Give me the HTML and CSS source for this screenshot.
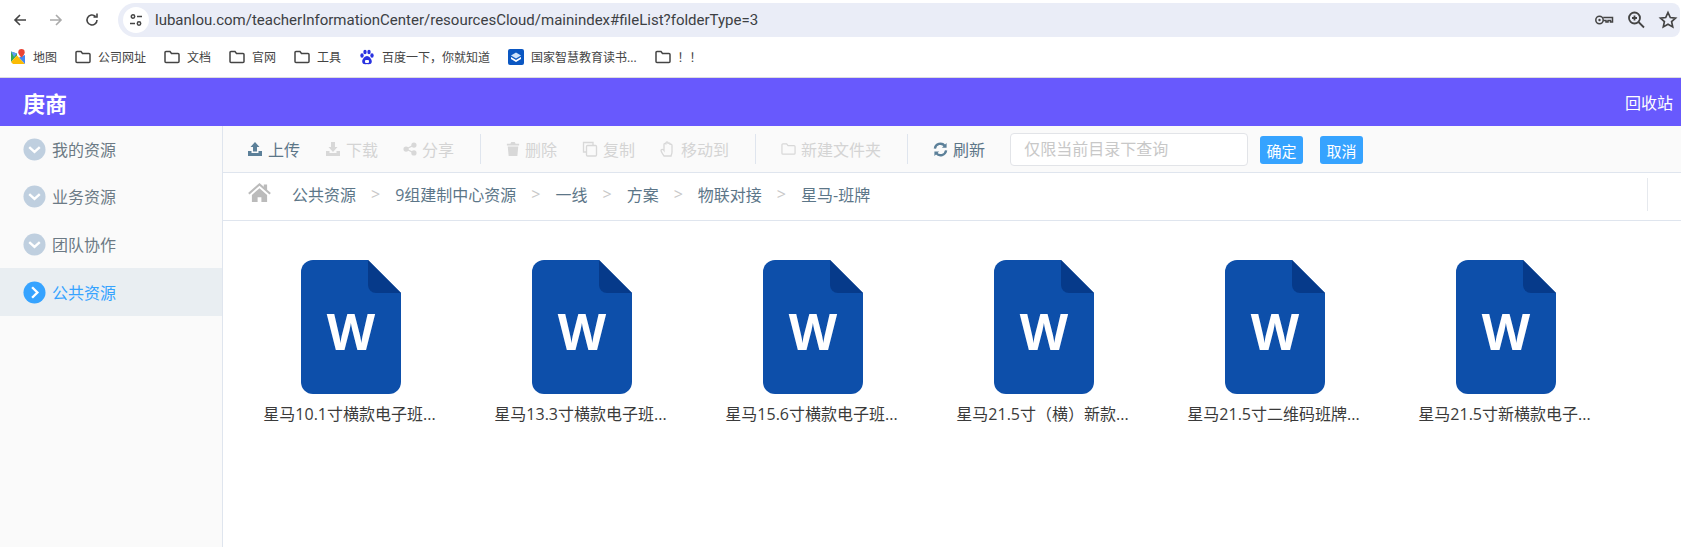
FILE: index.html
```html
<!DOCTYPE html>
<html lang="zh-CN">
<head>
    <meta charset="UTF-8">
    <title>资源云</title>
    <link rel="stylesheet" href="styles.css">
</head>
<body>
    <div class="browser-bar">
        <svg class="nav-icon" viewBox="0 0 16 16"><path d="M14 8H3M8 3 3 8l5 5" fill="none" stroke="#444" stroke-width="1.6"/></svg>
        <svg class="nav-icon" viewBox="0 0 16 16"><path d="M2 8h11M8 3l5 5-5 5" fill="none" stroke="#aaa" stroke-width="1.6"/></svg>
        <svg class="nav-icon" viewBox="0 0 16 16"><path d="M13 8a5 5 0 1 1-1.6-3.7M13 1.500V5H9.500" fill="none" stroke="#444" stroke-width="1.600"/></svg>
        <div class="omnibox">
            <span class="site-info">
                <svg viewBox="0 0 16 16" width="16" height="16"><g fill="none" stroke="#444" stroke-width="1.500"><circle cx="5" cy="4.500" r="1.700"/><path d="M9 4.500h5M2 11.500h5"/><circle cx="11" cy="11.500" r="1.700"/></g></svg>
            </span>
            <span class="url">lubanlou.com/teacherInformationCenter/resourcesCloud/mainindex#fileList?folderType=3</span>
            <span class="omni-icons">
                <svg viewBox="0 0 20 20" width="20" height="20"><g fill="none" stroke="#444" stroke-width="1.500"><circle cx="5.500" cy="10" r="3.700"/><path d="M9.200 7.500h9.300v4.500h-2v-1.500h-2.500V12h-2v-1.500h-2.800"/></g><circle cx="5.500" cy="10" r="1.200" fill="#444"/></svg>
                <svg viewBox="0 0 20 20" width="20" height="20"><g fill="none" stroke="#444" stroke-width="1.800"><circle cx="8.500" cy="8" r="5.500"/><path d="M12.500 12l5.500 5.500"/><path d="M6 8h5M8.500 5.500v5"/></g></svg>
                <svg viewBox="0 0 20 20" width="20" height="20"><path d="M10 2.500l2.300 5 5.200.6-3.900 3.500 1.100 5.300L10 14.200l-4.700 2.700 1.100-5.300L2.500 8.100l5.200-.6z" fill="none" stroke="#444" stroke-width="1.700"/></svg>
            </span>
        </div>
    </div>

    <div class="bookmarks">
        <span class="mark">
            <svg viewBox="0 0 16 16" width="16" height="16"><path d="M1 2.500 7 4.500v2L1 13z" fill="#34a853"/><path d="M1 13 7 6.500 15 15H3z" fill="#fbbc04"/><path d="M9 8.500 15 6v9z" fill="#4285f4"/><path d="M1 2.500 7 4.500 4 8z" fill="#5f9cf5"/><path d="M11.500 0a3.200 3.200 0 0 1 3.200 3.200c0 2.300-3.200 5.300-3.200 5.300S8.300 5.500 8.300 3.200A3.200 3.200 0 0 1 11.500 0z" fill="#ea4335"/></svg>
            地图
        </span>
        <span class="mark"><svg class="folder" viewBox="0 0 16 14"><path d="M1 2.500a1 1 0 0 1 1-1h4l1.500 2H14a1 1 0 0 1 1 1v7a1 1 0 0 1-1 1H2a1 1 0 0 1-1-1z" fill="none" stroke="#444" stroke-width="1.500"/></svg>公司网址</span>
        <span class="mark"><svg class="folder" viewBox="0 0 16 14"><path d="M1 2.500a1 1 0 0 1 1-1h4l1.500 2H14a1 1 0 0 1 1 1v7a1 1 0 0 1-1 1H2a1 1 0 0 1-1-1z" fill="none" stroke="#444" stroke-width="1.500"/></svg>文档</span>
        <span class="mark"><svg class="folder" viewBox="0 0 16 14"><path d="M1 2.500a1 1 0 0 1 1-1h4l1.500 2H14a1 1 0 0 1 1 1v7a1 1 0 0 1-1 1H2a1 1 0 0 1-1-1z" fill="none" stroke="#444" stroke-width="1.500"/></svg>官网</span>
        <span class="mark"><svg class="folder" viewBox="0 0 16 14"><path d="M1 2.500a1 1 0 0 1 1-1h4l1.500 2H14a1 1 0 0 1 1 1v7a1 1 0 0 1-1 1H2a1 1 0 0 1-1-1z" fill="none" stroke="#444" stroke-width="1.500"/></svg>工具</span>
        <span class="mark">
            <svg viewBox="0 0 16 16" width="16" height="16" fill="#2932e1"><ellipse cx="3" cy="6.500" rx="1.700" ry="2.200"/><ellipse cx="13" cy="6.500" rx="1.700" ry="2.200"/><ellipse cx="6" cy="3" rx="1.700" ry="2.300"/><ellipse cx="10" cy="3" rx="1.700" ry="2.300"/><path d="M8 7c-2 0-4.800 3-4.800 5.500C3.200 15.500 6 15.500 8 15c2 .5 4.800.5 4.800-2.500C12.800 10 10 7 8 7z"/><rect x="6" y="11" width="4" height="3" rx="1" fill="#fff"/></svg>
            百度一下，你就知道
        </span>
        <span class="mark">
            <svg viewBox="0 0 16 16" width="16" height="16"><rect width="16" height="16" rx="2" fill="#0b57c2"/><path d="M8 3.500l5 3-5 3-5-3z" fill="#cfe3fa"/><path d="M3 8l5 3 5-3v2l-5 3-5-3z" fill="#fff"/></svg>
            国家智慧教育读书...
        </span>
        <span class="mark"><svg class="folder" viewBox="0 0 16 14"><path d="M1 2.500a1 1 0 0 1 1-1h4l1.500 2H14a1 1 0 0 1 1 1v7a1 1 0 0 1-1 1H2a1 1 0 0 1-1-1z" fill="none" stroke="#444" stroke-width="1.500"/></svg>！！</span>
    </div>

    <header class="app-header">
        <span class="brand">庚商</span>
        <span class="recycle">回收站</span>
    </header>

    <div class="app-body">
        <aside class="sidebar">
            <div class="side-item">
                <svg class="side-icon" viewBox="0 0 24 24"><circle cx="12" cy="12" r="11.500" fill="#bfcfdf"/><path d="M6.500 9.500 12 14.500l5.500-5" fill="none" stroke="#fff" stroke-width="2.500"/></svg>
                我的资源
            </div>
            <div class="side-item">
                <svg class="side-icon" viewBox="0 0 24 24"><circle cx="12" cy="12" r="11.500" fill="#bfcfdf"/><path d="M6.500 9.500 12 14.500l5.500-5" fill="none" stroke="#fff" stroke-width="2.500"/></svg>
                业务资源
            </div>
            <div class="side-item">
                <svg class="side-icon" viewBox="0 0 24 24"><circle cx="12" cy="12" r="11.500" fill="#bfcfdf"/><path d="M6.500 9.500 12 14.500l5.500-5" fill="none" stroke="#fff" stroke-width="2.500"/></svg>
                团队协作
            </div>
            <div class="side-item active">
                <svg class="side-icon" viewBox="0 0 24 24"><circle cx="12" cy="12" r="11.500" fill="#36a3ff"/><path d="M9.500 6.500 15 12l-5.500 5.500" fill="none" stroke="#fff" stroke-width="2.500"/></svg>
                公共资源
            </div>
        </aside>

        <main class="content">
            <div class="toolbar">
                <span class="tool">
                    <svg viewBox="0 0 16 16" width="16" height="16" fill="#5c8099"><path d="M8 1l4.500 5H10v4.500H6V6H3.500z"/><path d="M1 10h3.500v2h7v-2H15v5H1z"/></svg>上传
                </span>
                <span class="tool off">
                    <svg viewBox="0 0 16 16" width="16" height="16" fill="#d8d8d8"><path d="M6 1h4v5h2.500L8 11 3.500 6H6z"/><path d="M1 10h3.500v2h7v-2H15v5H1z"/></svg>下载
                </span>
                <span class="tool off">
                    <svg viewBox="0 0 16 16" width="14" height="14" fill="#d8d8d8"><circle cx="3.500" cy="8" r="3"/><circle cx="12.500" cy="3.500" r="3"/><circle cx="12.500" cy="12.500" r="3"/><path d="M3.500 8l9-4.500M3.500 8l9 4.500" stroke="#d8d8d8" stroke-width="1.500"/></svg>分享
                </span>
                <span class="divider"></span>
                <span class="tool off">
                    <svg viewBox="0 0 16 16" width="14" height="14" fill="#d8d8d8"><path d="M6 0h4l1 2h4v2H1V2h4zM2 5h12l-1 11H3z"/></svg>删除
                </span>
                <span class="tool off">
                    <svg viewBox="0 0 16 16" width="16" height="16" fill="none" stroke="#d8d8d8" stroke-width="1.300"><path d="M11 4V1.500H1.500V11H4"/><rect x="4.500" y="4.500" width="10" height="10.500" rx="1"/></svg>复制
                </span>
                <span class="tool off">
                    <svg viewBox="0 0 16 16" width="16" height="16" fill="none" stroke="#d8d8d8" stroke-width="1.300"><path d="M4 15c-1-2-3-4-3-5.500S3 8 4 9.500V3.500c0-1.500 2-1.500 2 0V2c0-1.500 2-1.500 2 0v1c0-1.500 2-1.500 2 0v1c0-1.500 2-1 2 .5V11c0 2-1 3-1 4z"/></svg>移动到
                </span>
                <span class="divider"></span>
                <span class="tool off">
                    <svg viewBox="0 0 16 14" width="15" height="14" fill="none" stroke="#d8d8d8" stroke-width="1.300"><path d="M1 2.500a1 1 0 0 1 1-1h4l1.500 2H14a1 1 0 0 1 1 1v7a1 1 0 0 1-1 1H2a1 1 0 0 1-1-1z"/></svg>新建文件夹
                </span>
                <span class="divider"></span>
                <span class="tool">
                    <svg viewBox="0 0 16 16" width="15" height="15" fill="none" stroke="#5c8099" stroke-width="2.500"><path d="M2 7a6 6 0 0 1 10.500-3M14 9a6 6 0 0 1-10.500 3"/><path d="M14.500 1v5h-5zM1.500 15v-5h5z" fill="#5c8099" stroke="none"/></svg>刷新
                </span>
                <input class="search" type="text" placeholder="仅限当前目录下查询">
                <button class="btn btn-ok">确定</button>
                <button class="btn">取消</button>
            </div>

            <div class="crumbs">
                <svg class="home" viewBox="0 0 24 20" width="23" height="19"><path d="M12 0 0 10.500l1.500 1.500L12 3l10.500 9 1.500-1.500L20 7V1.500h-3.500V4z" fill="#bbb"/><path d="M4 12.500 12 5.500l8 7V20h-6v-5h-4v5H4z" fill="#bbb"/></svg>
                <span>公共资源</span>
                <span class="sep">&gt;</span>
                <span>9组建制中心资源</span>
                <span class="sep">&gt;</span>
                <span>一线</span>
                <span class="sep">&gt;</span>
                <span>方案</span>
                <span class="sep">&gt;</span>
                <span>物联对接</span>
                <span class="sep">&gt;</span>
                <span>星马-班牌</span>
                <span class="crumb-end"></span>
            </div>

            <div class="file-grid">
                <div class="file">
                    <svg class="word" viewBox="0 0 100 134"><path d="M12 0h55l33 33v89a12 12 0 0 1-12 12H12a12 12 0 0 1-12-12V12A12 12 0 0 1 12 0z" fill="#0d4faa"/><path d="M67 0l33 33H75a8 8 0 0 1-8-8z" fill="#063a8a"/></svg>
                    <span class="file-w">W</span>
                    <div class="file-name">星马10.1寸横款电子班...</div>
                </div>
                <div class="file">
                    <svg class="word" viewBox="0 0 100 134"><path d="M12 0h55l33 33v89a12 12 0 0 1-12 12H12a12 12 0 0 1-12-12V12A12 12 0 0 1 12 0z" fill="#0d4faa"/><path d="M67 0l33 33H75a8 8 0 0 1-8-8z" fill="#063a8a"/></svg>
                    <span class="file-w">W</span>
                    <div class="file-name">星马13.3寸横款电子班...</div>
                </div>
                <div class="file">
                    <svg class="word" viewBox="0 0 100 134"><path d="M12 0h55l33 33v89a12 12 0 0 1-12 12H12a12 12 0 0 1-12-12V12A12 12 0 0 1 12 0z" fill="#0d4faa"/><path d="M67 0l33 33H75a8 8 0 0 1-8-8z" fill="#063a8a"/></svg>
                    <span class="file-w">W</span>
                    <div class="file-name">星马15.6寸横款电子班...</div>
                </div>
                <div class="file">
                    <svg class="word" viewBox="0 0 100 134"><path d="M12 0h55l33 33v89a12 12 0 0 1-12 12H12a12 12 0 0 1-12-12V12A12 12 0 0 1 12 0z" fill="#0d4faa"/><path d="M67 0l33 33H75a8 8 0 0 1-8-8z" fill="#063a8a"/></svg>
                    <span class="file-w">W</span>
                    <div class="file-name">星马21.5寸（横）新款...</div>
                </div>
                <div class="file">
                    <svg class="word" viewBox="0 0 100 134"><path d="M12 0h55l33 33v89a12 12 0 0 1-12 12H12a12 12 0 0 1-12-12V12A12 12 0 0 1 12 0z" fill="#0d4faa"/><path d="M67 0l33 33H75a8 8 0 0 1-8-8z" fill="#063a8a"/></svg>
                    <span class="file-w">W</span>
                    <div class="file-name">星马21.5寸二维码班牌...</div>
                </div>
                <div class="file">
                    <svg class="word" viewBox="0 0 100 134"><path d="M12 0h55l33 33v89a12 12 0 0 1-12 12H12a12 12 0 0 1-12-12V12A12 12 0 0 1 12 0z" fill="#0d4faa"/><path d="M67 0l33 33H75a8 8 0 0 1-8-8z" fill="#063a8a"/></svg>
                    <span class="file-w">W</span>
                    <div class="file-name">星马21.5寸新横款电子...</div>
                </div>
            </div>
        </main>
    </div>
</body>
</html>
```
FILE: styles.css
```css
* {
    box-sizing: border-box;
}
html, body {
    height: 100%;
}
body {
    margin: 0;
    height: 547px;
    overflow: hidden;
    display: flex;
    flex-direction: column;
    font-family: "Open Sans", "Noto Sans CJK SC", sans-serif;
    background-color: #ffffff;
}
.browser-bar {
    height: 40px;
    flex: none;
    display: flex;
    align-items: center;
    padding: 3px 1px 3px 12px;
}
.nav-icon {
    width: 16px;
    height: 16px;
    margin-right: 20px;
    flex: none;
}
.omnibox {
    flex: 1;
    height: 34px;
    margin-left: -2px;
    background-color: #eaedf7;
    border-radius: 17px 8px 8px 17px;
    display: flex;
    align-items: center;
    padding-left: 5px;
}
.site-info {
    width: 26px;
    height: 26px;
    border-radius: 50%;
    background-color: #ffffff;
    display: flex;
    align-items: center;
    justify-content: center;
}
.url {
    margin-left: 6px;
    font-family: Roboto, sans-serif;
    font-size: 15px;
    color: #3c4043;
    flex: 1;
}
.omni-icons {
    display: flex;
    gap: 12px;
    margin-right: 2px;
}
.bookmarks {
    height: 38px;
    flex: none;
    display: flex;
    align-items: center;
    padding-left: 10px;
    padding-bottom: 3px;
    gap: 18px;
    font-size: 12px;
    color: #444444;
    border-bottom: 1px solid #dddddd;
}
.mark {
    display: flex;
    align-items: center;
    gap: 7px;
}
.folder {
    width: 16px;
    height: 14px;
}
.app-header {
    height: 48px;
    flex: none;
    background-color: #6859fd;
    display: flex;
    align-items: center;
    justify-content: space-between;
    padding: 0 8px 0 23px;
    color: #ffffff;
}
.brand {
    font-size: 22px;
    font-weight: 700;
}
.recycle {
    font-size: 16px;
}
.app-body {
    flex: 1;
    display: flex;
    min-height: 0;
}
.sidebar {
    width: 223px;
    flex: none;
    background-color: #fafafa;
    border-right: 1px solid #dfe5ee;
}
.side-item {
    height: 48px;
    display: flex;
    align-items: center;
    padding-left: 23px;
    gap: 6px;
    font-size: 16px;
    color: #6c7a85;
}
.side-item:first-child {
    height: 46px;
}
.side-item.active {
    background-color: #e9eef2;
    color: #36a3ff;
}
.side-icon {
    width: 23px;
    height: 23px;
}
.content {
    flex: 1;
    min-width: 0;
    display: flex;
    flex-direction: column;
}
.toolbar {
    height: 47px;
    flex: none;
    display: flex;
    align-items: center;
    padding-left: 24px;
    background-color: #fafafa;
    border-bottom: 1px solid #dfe5ee;
    font-size: 16px;
    color: #5c7688;
}
.tool {
    display: flex;
    align-items: center;
    gap: 5px;
    margin-right: 25px;
}
.tool.off {
    color: #d4d4d4;
}
.divider {
    width: 1px;
    height: 30px;
    background-color: #dfe5ee;
    margin: 0 25px 0 1px;
}
.search {
    width: 238px;
    height: 33px;
    margin-right: 12px;
    padding: 0 13px;
    border: 1px solid #e2e4e8;
    border-radius: 4px;
    background-color: #ffffff;
    font-family: inherit;
    font-size: 16px;
    outline: none;
}
.search::placeholder {
    color: #c8c8c8;
}
.btn {
    width: 43px;
    height: 28px;
    margin-top: 2px;
    padding: 0;
    border: none;
    border-radius: 3px;
    background-color: #36a3ff;
    color: #ffffff;
    font-family: inherit;
    font-size: 15px;
}
.btn-ok {
    margin-right: 17px;
}
.crumbs {
    height: 48px;
    flex: none;
    display: flex;
    align-items: center;
    padding: 0 0 5px 25px;
    border-bottom: 1px solid #dfe5ee;
    font-size: 16px;
    color: #5c7688;
    gap: 15px;
}
.home {
    margin: -3px 6px 0 0;
}
.sep {
    color: #c8c8c8;
}
.crumb-end {
    margin-left: auto;
    width: 1px;
    height: 33px;
    background-color: #e6e9ee;
    margin-right: 33px;
}
.file-grid {
    display: flex;
    padding-top: 39px;
    padding-left: 25px;
}
.file {
    width: 231px;
    position: relative;
    display: flex;
    flex-direction: column;
    align-items: center;
}
.word {
    width: 100px;
    height: 134px;
    margin-right: 25px;
}
.file-w {
    position: absolute;
    top: 39px;
    left: 0;
    width: 206px;
    text-align: center;
    font-family: "Open Sans", sans-serif;
    font-weight: 700;
    font-size: 50px;
    line-height: 65px;
    color: #ffffff;
}
.file-name {
    margin: 7px 25px 0 -3px;
    width: 206px;
    text-align: center;
    font-size: 16px;
    color: #3a3a3a;
}
```
